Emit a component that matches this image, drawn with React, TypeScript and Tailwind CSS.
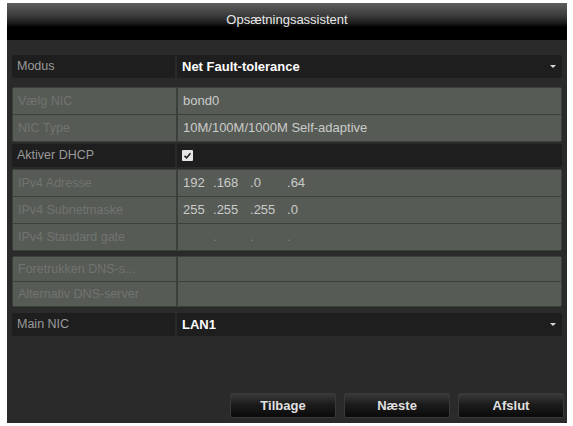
import React from "react";

type Row = { label: string; value?: React.ReactNode };

function GrayGroup({ rows, h = 26 }: { rows: Row[]; h?: number }) {
  return (
    <div className="mx-[5px] flex flex-col rounded-[2px] border border-[#3c403b] bg-[#3c403b]">
      {rows.map((r, i) => (
        <div key={r.label} className={`flex ${h === 26 ? "h-[26px]" : "h-[24px]"} ${i > 0 ? "mt-px" : ""}`}>
          <div className="flex w-[163px] items-center bg-[#575b56] pl-[5px] text-[12.5px] text-[#70746f]">
            {r.label}
          </div>
          <div className="ml-[2px] flex flex-1 items-center bg-[#575b56] pl-[5px] text-[13px] text-[#c9cbc8]">
            {r.value}
          </div>
        </div>
      ))}
    </div>
  );
}

function DarkRow({ label, value, arrow }: { label: string; value: React.ReactNode; arrow?: boolean }) {
  return (
    <div className="mx-[5px] flex h-[23px]">
      <div className="flex w-[163px] items-center rounded-l-[2px] bg-[#1e1e1e] pl-[5px] text-[12.5px] text-[#9a9a9a]">
        {label}
      </div>
      <div className="ml-[2px] flex flex-1 items-center justify-between rounded-r-[2px] bg-[#1e1e1e] pl-[5px] pr-[6px] text-[13px] font-bold text-white">
        <span>{value}</span>
        {arrow && <span className="h-0 w-0 border-x-[3px] border-t-[3px] border-x-transparent border-t-[#d8d8d8]" />}
      </div>
    </div>
  );
}

function Ip({ parts }: { parts: string[] }) {
  return (
    <span className="flex">
      {parts.map((p, i) => (
        <span key={i} className={i === 0 ? "w-[30px]" : "w-[37px]"}>
          {i > 0 ? "." : ""}
          {p}
        </span>
      ))}
    </span>
  );
}

export default function App() {
  return (
    <div className="h-[426px] w-[573px] bg-white pl-[7px] pt-[3px] font-['Liberation_Sans',Arial,sans-serif]">
      <div className="flex h-[420px] w-[560px] flex-col bg-[#2a2a2a]">
        <div className="flex h-[37px] items-center justify-center bg-[linear-gradient(180deg,#5e5e5e_0%,#3a3a3a_35%,#1a1a1a_55%,#000_65%,#000_100%)] text-[13px] text-[#e8e8e8]">
          <span className="-mt-[4px]">Opsætningsassistent</span>
        </div>
        <div className="mt-[15px] flex flex-col">
          <DarkRow label="Modus" value="Net Fault-tolerance" arrow />
          <div className="mt-[9px]">
            <GrayGroup
              rows={[
                { label: "Vælg NIC", value: "bond0" },
                { label: "NIC Type", value: "10M/100M/1000M Self-adaptive" },
              ]}
            />
          </div>
          <div className="mt-[2px]">
            <DarkRow
              label="Aktiver DHCP"
              value={
                <span className="flex h-[11px] w-[11px] items-center justify-center rounded-[1px] bg-[#e6e6e6]">
                  <svg width="9" height="9" viewBox="0 0 9 9">
                    <path d="M1.5 4.8 L3.6 6.8 L7.5 2.2" stroke="#222" strokeWidth="1.6" fill="none" />
                  </svg>
                </span>
              }
            />
          </div>
          <div className="mt-[2px]">
            <GrayGroup
              rows={[
                { label: "IPv4 Adresse", value: <Ip parts={["192", "168", "0", "64"]} /> },
                { label: "IPv4 Subnetmaske", value: <Ip parts={["255", "255", "255", "0"]} /> },
                {
                  label: "IPv4 Standard gate",
                  value: (
                    <span className="flex text-[#80847f]">
                      <span className="w-[30px]" />
                      <span className="w-[37px]">.</span>
                      <span className="w-[37px]">.</span>
                      <span className="w-[37px]">.</span>
                    </span>
                  ),
                },
              ]}
            />
          </div>
          <div className="mt-[5px]">
            <GrayGroup
              h={24}
              rows={[
                { label: "Foretrukken DNS-s..." },
                { label: "Alternativ DNS-server" },
              ]}
            />
          </div>
          <div className="mt-[6px]">
            <DarkRow label="Main NIC" value="LAN1" arrow />
          </div>
        </div>
        <div className="mt-auto mb-[5px] flex justify-end gap-[8px] pr-[3px]">
          {["Tilbage", "Næste", "Afslut"].map((b) => (
            <div
              key={b}
              className="flex h-[25px] w-[106px] items-center justify-center rounded-[2px] border border-[#3a3a3a] bg-[linear-gradient(180deg,#3a3a3a_0%,#1c1c1c_45%,#0a0a0a_100%)] text-[13px] font-bold text-[#e0e0e0]"
            >
              {b}
            </div>
          ))}
        </div>
      </div>
    </div>
  );
}
